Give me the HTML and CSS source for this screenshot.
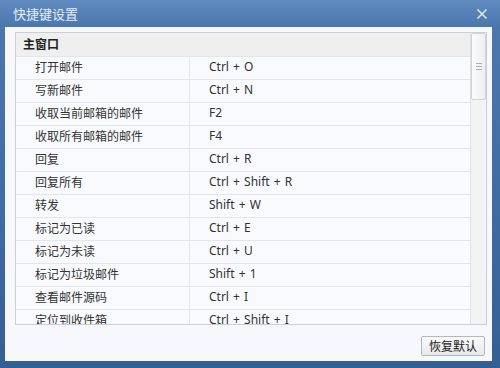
FILE: index.html
```html
<!DOCTYPE html>
<html>
<head>
<meta charset="utf-8">
<link rel="stylesheet" href="styles.css">
</head>
<body>
<div class="window">
  <div class="titlebar">
    <span class="title">快捷键设置</span>
    <svg class="close" width="12" height="12" viewBox="0 0 12 12"><path d="M1.5 1.5 L10.5 10.5 M10.5 1.5 L1.5 10.5" stroke="#dfe8f2" stroke-width="1.6" fill="none"/></svg>
  </div>
  <div class="content">
    <div class="table">
      <div class="list">
        <div class="group">主窗口</div>
        <div class="row"><div class="c1">打开邮件</div><div class="c2">Ctrl + O</div></div>
        <div class="row"><div class="c1">写新邮件</div><div class="c2">Ctrl + N</div></div>
        <div class="row"><div class="c1">收取当前邮箱的邮件</div><div class="c2">F2</div></div>
        <div class="row"><div class="c1">收取所有邮箱的邮件</div><div class="c2">F4</div></div>
        <div class="row"><div class="c1">回复</div><div class="c2">Ctrl + R</div></div>
        <div class="row"><div class="c1">回复所有</div><div class="c2">Ctrl + Shift + R</div></div>
        <div class="row"><div class="c1">转发</div><div class="c2">Shift + W</div></div>
        <div class="row"><div class="c1">标记为已读</div><div class="c2">Ctrl + E</div></div>
        <div class="row"><div class="c1">标记为未读</div><div class="c2">Ctrl + U</div></div>
        <div class="row"><div class="c1">标记为垃圾邮件</div><div class="c2">Shift + 1</div></div>
        <div class="row"><div class="c1">查看邮件源码</div><div class="c2">Ctrl + I</div></div>
        <div class="row"><div class="c1">定位到收件箱</div><div class="c2">Ctrl + Shift + I</div></div>
      </div>
      <div class="scrollbar">
        <div class="thumb"><span></span><span></span><span></span></div>
      </div>
    </div>
    <div class="footer">
      <button class="btn">恢复默认</button>
    </div>
  </div>
</div>
</body>
</html>
```
FILE: styles.css
```css
html, body {
  margin: 0;
  padding: 0;
  background: #ffffff;
}
.window {
  width: 500px;
  height: 368px;
  box-sizing: border-box;
  padding: 0 8px 7px 5px;
  background: linear-gradient(to bottom, #5f8bbf 0px, #4b77ad 27px, #3f6ca3 200px, #345f95 368px);
  display: flex;
  flex-direction: column;
  font-family: "Noto Sans", "Noto Sans CJK SC", sans-serif;
  font-size: 12px;
  color: #333333;
}
.titlebar {
  height: 27px;
  flex: none;
  display: flex;
  align-items: center;
  justify-content: space-between;
  padding: 0 4px 0 8px;
}
.title {
  color: #e6edf6;
  font-size: 13px;
  font-family: "Noto Sans CJK SC", sans-serif;
}
.close {
  display: block;
  margin-top: 1px;
}
.content {
  flex: 1;
  background: #f6f8fb;
  padding: 5px 5px 0 10px;
  display: flex;
  flex-direction: column;
  min-height: 0;
}
.table {
  height: 293px;
  box-sizing: border-box;
  border: 1px solid #c9cfd7;
  background: #f8fafd;
  display: flex;
  overflow: hidden;
}
.list {
  flex: 1;
  overflow: hidden;
}
.group {
  height: 23px;
  line-height: 22px;
  background: #efeff0;
  padding-left: 7px;
  font-weight: bold;
  font-family: "Noto Sans CJK SC", sans-serif;
  color: #222222;
  box-sizing: border-box;
}
.row {
  height: 23px;
  box-sizing: border-box;
  border-top: 1px solid #e2e6eb;
  display: flex;
  line-height: 20px;
}
.c1 {
  width: 174px;
  flex: none;
  box-sizing: border-box;
  border-right: 1px solid #e2e6eb;
  padding-left: 19px;
  font-family: "Noto Sans CJK SC", sans-serif;
}
.c2 {
  flex: 1;
  padding-left: 19px;
  word-spacing: 1px;
}
.scrollbar {
  width: 16px;
  flex: none;
  background: #f2f3f5;
  border-left: 1px solid #dde0e4;
  box-sizing: border-box;
}
.thumb {
  height: 67px;
  box-sizing: border-box;
  border: 1px solid #cfd3d8;
  border-radius: 2px;
  background: linear-gradient(to right, #fbfbfc, #eceef0);
  display: flex;
  flex-direction: column;
  align-items: center;
  justify-content: center;
  gap: 2px;
}
.thumb span {
  display: block;
  width: 6px;
  height: 1px;
  background: #a9afb6;
}
.footer {
  display: flex;
  justify-content: flex-end;
  padding-top: 11px;
  padding-right: 2px;
}
.btn {
  width: 64px;
  height: 20px;
  padding: 0;
  border: 1px solid #b3b8bf;
  border-radius: 2px;
  background: linear-gradient(to bottom, #fafafa, #e6e8eb);
  font-family: "Noto Sans CJK SC", sans-serif;
  font-size: 12px;
  color: #222222;
  line-height: 18px;
}
```
